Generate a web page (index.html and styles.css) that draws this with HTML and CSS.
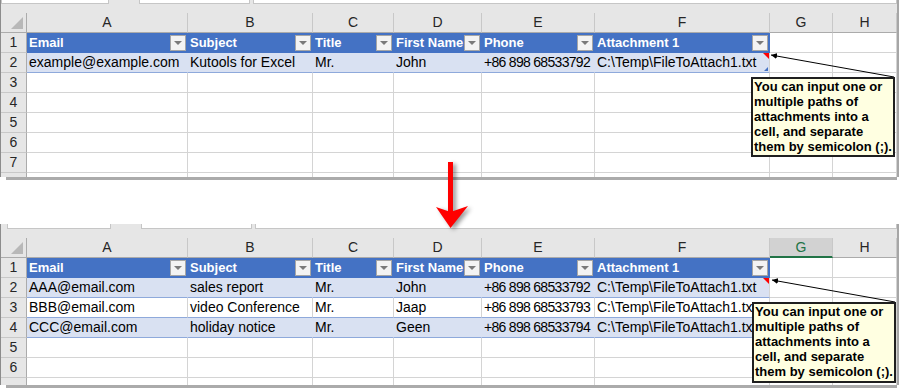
FILE: index.html
```html
<!DOCTYPE html>
<html lang="en">
<head>
  <meta charset="UTF-8" />
  <title>Send emails with attachments</title>
  <link rel="stylesheet" href="styles.css">
</head>
<body>
<div class="page">

  <!-- before -->
  <div class="sheet">
    <div class="strip">
      <span class="box name"></span>
      <span class="box fx"></span>
      <span class="box formula"></span>
    </div>
    <div class="grid top">
      <div class="col corner"></div><div class="col">A</div><div class="col">B</div><div class="col">C</div><div class="col">D</div><div class="col">E</div><div class="col">F</div><div class="col">G</div><div class="col">H</div>

      <div class="rn">1</div>
      <div class="th">Email<span class="dd"></span></div>
      <div class="th">Subject<span class="dd"></span></div>
      <div class="th">Title<span class="dd"></span></div>
      <div class="th">First Name<span class="dd"></span></div>
      <div class="th">Phone<span class="dd"></span></div>
      <div class="th">Attachment 1<span class="dd"></span></div>
      <div></div><div></div>

      <div class="rn">2</div>
      <div class="band">example@example.com</div>
      <div class="band">Kutools for Excel</div>
      <div class="band">Mr.</div>
      <div class="band">John</div>
      <div class="band num">+86 898 68533792</div>
      <div class="band last">C:\Temp\FileToAttach1.txt<span class="mark"></span><span class="handle"></span></div>
      <div></div><div></div>

      <div class="rn">3</div><div></div><div></div><div></div><div></div><div></div><div></div><div></div><div></div>
      <div class="rn">4</div><div></div><div></div><div></div><div></div><div></div><div></div><div></div><div></div>
      <div class="rn">5</div><div></div><div></div><div></div><div></div><div></div><div></div><div></div><div></div>
      <div class="rn">6</div><div></div><div></div><div></div><div></div><div></div><div></div><div></div><div></div>
      <div class="rn">7</div><div></div><div></div><div></div><div></div><div></div><div></div><div></div><div></div>
      <div class="rn"></div><div></div><div></div><div></div><div></div><div></div><div></div><div></div><div></div>
    </div>
    <div class="bar"></div>

    <svg class="link" width="899" height="180">
      <defs>
        <marker id="tip1" markerWidth="6" markerHeight="6" refX="6" refY="3" orient="auto">
          <path d="M0,0 L6,3 L0,6 z" fill="#000"/>
        </marker>
      </defs>
      <line x1="894" y1="77" x2="771" y2="55" stroke="#000" stroke-width="1" marker-end="url(#tip1)"/>
    </svg>
    <div class="note">You can input one or<br>multiple paths of<br>attachments into a<br>cell, and separate<br>them by semicolon (;).</div>
  </div>

  <svg class="arrow" width="50" height="80" viewBox="0 0 50 80">
    <rect x="18" y="7" width="5" height="52" fill="#f00"/>
    <polygon points="6,52 20.5,57 38,51 20.5,73" fill="#f00"/>
  </svg>

  <!-- after -->
  <div class="sheet after">
    <div class="strip">
      <span class="box name"></span>
      <span class="box fx"></span>
      <span class="box formula"></span>
    </div>
    <div class="grid bottom">
      <div class="col corner"></div><div class="col">A</div><div class="col">B</div><div class="col">C</div><div class="col">D</div><div class="col">E</div><div class="col">F</div><div class="col sel">G</div><div class="col">H</div>

      <div class="rn">1</div>
      <div class="th">Email<span class="dd"></span></div>
      <div class="th">Subject<span class="dd"></span></div>
      <div class="th">Title<span class="dd"></span></div>
      <div class="th">First Name<span class="dd"></span></div>
      <div class="th">Phone<span class="dd"></span></div>
      <div class="th">Attachment 1<span class="dd"></span></div>
      <div></div><div></div>

      <div class="rn">2</div>
      <div class="band">AAA@email.com</div>
      <div class="band">sales report</div>
      <div class="band">Mr.</div>
      <div class="band">John</div>
      <div class="band num">+86 898 68533792</div>
      <div class="band last">C:\Temp\FileToAttach1.txt<span class="mark"></span></div>
      <div></div><div></div>

      <div class="rn">3</div>
      <div class="plain">BBB@email.com</div>
      <div class="plain">video Conference</div>
      <div class="plain">Mr.</div>
      <div class="plain">Jaap</div>
      <div class="plain num">+86 898 68533793</div>
      <div class="plain">C:\Temp\FileToAttach1.txt</div>
      <div></div><div></div>

      <div class="rn">4</div>
      <div class="band">CCC@email.com</div>
      <div class="band">holiday notice</div>
      <div class="band">Mr.</div>
      <div class="band">Geen</div>
      <div class="band num">+86 898 68533794</div>
      <div class="band last">C:\Temp\FileToAttach1.txt</div>
      <div></div><div></div>

      <div class="rn">5</div><div></div><div></div><div></div><div></div><div></div><div></div><div></div><div></div>
      <div class="rn">6</div><div></div><div></div><div></div><div></div><div></div><div></div><div></div><div></div>
      <div class="rn"></div><div></div><div></div><div></div><div></div><div></div><div></div><div></div><div></div>
    </div>
    <div class="bar"></div>

    <svg class="link" width="899" height="164">
      <defs>
        <marker id="tip2" markerWidth="6" markerHeight="6" refX="6" refY="3" orient="auto">
          <path d="M0,0 L6,3 L0,6 z" fill="#000"/>
        </marker>
      </defs>
      <line x1="895" y1="78" x2="772" y2="56" stroke="#000" stroke-width="1" marker-end="url(#tip2)"/>
    </svg>
    <div class="note">You can input one or<br>multiple paths of<br>attachments into a<br>cell, and separate<br>them by semicolon (;).</div>
  </div>

</div>
</body>
</html>
```

FILE: styles.css
```css
body {
  margin: 0;
  background-color: #fff;
  color: #000;
  font-family: "Liberation Sans", Arial, sans-serif;
  font-size: 14px;
}

.page {
  position: relative;
  width: 901px;
  height: 390px;
  overflow: hidden;
}

.sheet {
  position: relative;
  width: 899px;
}

.sheet.after { margin-top: 44px; }

/* formula bar leftovers */
.strip {
  height: 13px;
  box-sizing: border-box;
  background-color: #e6e6e6;
  border-left: 1px solid #8c8c8c;
  border-right: 2px solid #a6a6a6;
  display: flex;
  align-items: flex-start;
}

.after .strip { height: 14px; }

.box {
  height: 3px;
  background-color: #fff;
  border: 1px solid #c6c6c6;
  border-top: none;
}

.after .box { height: 4px; }

.box.name { width: 106px; }
.box.fx { width: 109px; margin-left: 30px; }
.box.formula { flex: 1; margin-left: 3px; }
.after .box.name { width: 102px; margin-left: 6px; }

/* cells */
.grid {
  display: grid;
  grid-template-columns: 26px 161px 125px 81px 88px 113px 175px 63px 64px;
  grid-auto-rows: 20px;
  border-left: 1px solid #8c8c8c;
  border-right: 2px solid #a6a6a6;
  overflow: hidden;
}

.grid.top { height: 164px; }
.grid.bottom { height: 147px; }

.grid > div {
  position: relative;
  box-sizing: border-box;
  border-right: 1px solid #d4d4d4;
  border-bottom: 1px solid #d4d4d4;
  padding: 0 2px;
  line-height: 19px;
  white-space: nowrap;
  overflow: hidden;
}

.grid > .col {
  background-color: #e6e6e6;
  border-right-color: #c8c8c8;
  border-bottom-color: #ababab;
  text-align: center;
  color: #262626;
}

.grid > .col.sel {
  background-color: #d2d2d2;
  color: #217346;
  border-bottom: 2px solid #217346;
}

.grid > .corner { border-right-color: #ababab; }

.corner::after {
  content: "";
  position: absolute;
  right: 3px;
  bottom: 3px;
  border-left: 12px solid transparent;
  border-bottom: 12px solid #b8b8b8;
}

.grid > .rn {
  background-color: #e6e6e6;
  border-right-color: #ababab;
  border-bottom-color: #c8c8c8;
  text-align: center;
  color: #262626;
  padding: 0;
}

.grid > .th {
  background-color: #4472c4;
  border-color: #4472c4;
  color: #fff;
  font-weight: bold;
  font-size: 13px;
}

.dd {
  position: absolute;
  right: 1px;
  top: 2px;
  width: 16px;
  height: 16px;
  box-sizing: border-box;
  background-color: #f3f3f3;
  border: 1px solid #a6a6a6;
}

.dd::after {
  content: "";
  position: absolute;
  left: 3px;
  top: 5px;
  border-left: 4px solid transparent;
  border-right: 4px solid transparent;
  border-top: 4px solid #7a7a7a;
}

.grid > .band {
  background-color: #d9e1f2;
  border-right-color: #d9e1f2;
  border-bottom-color: #8ea9db;
}

.grid > .plain { border-bottom-color: #8ea9db; }
.grid > .last { border-right-color: #d4d4d4; }

.num { letter-spacing: -0.7px; }

.mark {
  position: absolute;
  top: 0;
  right: 0;
  border-left: 6px solid transparent;
  border-top: 6px solid #f00;
}

.handle {
  position: absolute;
  right: 1px;
  bottom: 1px;
  border-left: 4px solid transparent;
  border-bottom: 4px solid #4472c4;
}

.bar {
  height: 3px;
  margin-left: 6px;
  width: 891px;
  background-color: #ababab;
}

/* comment boxes */
.link {
  position: absolute;
  left: 0;
  top: 0;
  pointer-events: none;
  z-index: 2;
}

.note {
  position: absolute;
  left: 751px;
  top: 77px;
  width: 144px;
  height: 80px;
  box-sizing: border-box;
  background-color: #ffffe1;
  border: 2px solid #1f1f1f;
  padding: 0 0 0 1px;
  font-size: 13px;
  font-weight: bold;
  line-height: 15px;
  white-space: nowrap;
  z-index: 3;
}

.after .note {
  left: 752px;
  top: 78px;
  height: 81px;
}

.arrow {
  position: absolute;
  left: 430px;
  top: 155px;
  z-index: 4;
  filter: drop-shadow(3px 2px 2px rgba(0, 0, 0, 0.4));
}
```
